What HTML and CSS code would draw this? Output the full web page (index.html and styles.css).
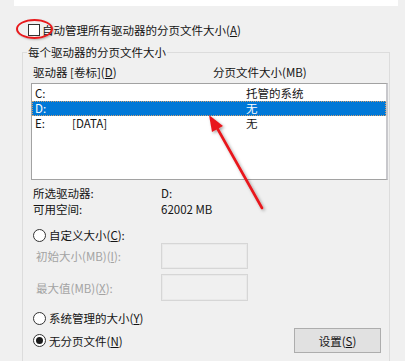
FILE: index.html
```html
<!DOCTYPE html>
<html lang="zh-CN">
<head>
<meta charset="utf-8">
<title>虚拟内存</title>
<link rel="stylesheet" href="styles.css">
</head>
<body>
<div class="page">
  <div class="topband"></div>
  <div class="auto-row">
    <span class="checkbox"></span>
    <span class="auto-label">自动管理所有驱动器的分页文件大小(<u>A</u>)</span>
  </div>
  <fieldset class="group">
    <legend class="legend">每个驱动器的分页文件大小</legend>
    <div class="headers">
      <span class="h-drive">驱动器 [卷标](<u>D</u>)</span>
      <span class="h-size">分页文件大小(MB)</span>
    </div>
    <div class="listbox">
      <div class="row"><span>C:</span><span></span><span>托管的系统</span></div>
      <div class="row selected"><span>D:</span><span></span><span>无</span></div>
      <div class="row"><span>E:</span><span>[DATA]</span><span>无</span></div>
    </div>
    <div class="info">
      <div class="info-row"><span class="info-label">所选驱动器:</span><span>D:</span></div>
      <div class="info-row"><span class="info-label">可用空间:</span><span>62002 MB</span></div>
    </div>
    <div class="radio-row custom">
      <span class="radio"></span><span>自定义大小(<u>C</u>):</span>
    </div>
    <div class="field-row first">
      <span class="field-label">初始大小(MB)(<u>I</u>):</span>
      <span class="field-input"></span>
    </div>
    <div class="field-row second">
      <span class="field-label">最大值(MB)(<u>X</u>):</span>
      <span class="field-input"></span>
    </div>
    <div class="radio-row system">
      <span class="radio"></span><span>系统管理的大小(<u>Y</u>)</span>
    </div>
    <div class="last-row">
      <div class="radio-row">
        <span class="radio checked"></span><span>无分页文件(<u>N</u>)</span>
      </div>
      <button class="btn" type="button">设置(<u>S</u>)</button>
    </div>
  </fieldset>

  <span class="ellipse"></span>
  <svg class="arrow" width="405" height="361" viewBox="0 0 405 361" xmlns="http://www.w3.org/2000/svg">
    <defs>
      <filter id="sh" x="-50%" y="-50%" width="200%" height="200%">
        <feDropShadow dx="1.5" dy="1.5" stdDeviation="1.5" flood-color="#000" flood-opacity="0.35"/>
      </filter>
    </defs>
    <g filter="url(#sh)">
      <line x1="262" y1="208" x2="216" y2="126" stroke="#e8191c" stroke-width="2.6" stroke-linecap="round"/>
      <polygon points="209,115 223,126 212,132" fill="#e8191c"/>
    </g>
  </svg>
</div>
</body>
</html>
```

FILE: styles.css
```css
html, body {
  margin: 0;
  padding: 0;
}
body {
  background: #f0f0f0;
  font-family: "Noto Sans CJK SC", "Noto Sans", sans-serif;
  font-size: 11.5px;
  color: #141414;
  overflow: hidden;
  width: 405px;
  height: 361px;
}
.page {
  position: relative;
  width: 405px;
  height: 361px;
  overflow: hidden;
}
u {
  text-decoration: underline;
  text-underline-offset: 1px;
}
.topband {
  margin-left: 14px;
  width: 384px;
  height: 6px;
  background: #ffffff;
}
.auto-row {
  display: flex;
  align-items: center;
  margin-top: 18px;
  margin-left: 28px;
  height: 12px;
  gap: 2px;
}
.checkbox {
  box-sizing: border-box;
  width: 12px;
  height: 12px;
  border: 1px solid #333;
  background: #fff;
  flex: none;
}
.auto-label {
  line-height: 16px;
  white-space: nowrap;
}
.group {
  box-sizing: border-box;
  margin: 8px 0 0 22px;
  width: 368px;
  min-width: 0;
  border: 1px solid #dcdcdc;
  padding: 0 1px 24px 8px;
}
.legend {
  padding: 0 1px;
  margin-left: -4px;
  line-height: 16px;
  white-space: nowrap;
}
.headers {
  display: flex;
  margin-top: 4px;
  height: 16px;
  line-height: 16px;
  padding-left: 2px;
  white-space: nowrap;
}
.h-drive {
  width: 180px;
}
.listbox {
  box-sizing: border-box;
  margin-top: 3px;
  height: 97px;
  background: #fff;
  border: 1px solid #a2a2a2;
  border-right: 2px solid #c8c8cc;
  padding-top: 2px;
}
.row {
  display: grid;
  grid-template-columns: 37px 174px 1fr;
  height: 15px;
  line-height: 15px;
  padding-left: 3px;
  white-space: nowrap;
}
.row.selected {
  background: #0078d7;
  color: #fff;
  outline: 1px dotted #d0a070;
  outline-offset: -1px;
}
.info {
  margin-top: 5px;
}
.info-row {
  display: flex;
  height: 16px;
  line-height: 16px;
  padding-left: 2px;
}
.info-label {
  width: 128px;
}
.radio-row {
  display: flex;
  align-items: center;
  height: 16px;
  line-height: 16px;
  padding-left: 2px;
  gap: 3px;
  white-space: nowrap;
}
.radio-row.custom {
  margin-top: 10px;
}
.radio-row.system {
  margin-top: 9px;
}
.radio {
  box-sizing: border-box;
  width: 13px;
  height: 13px;
  border: 1px solid #333;
  border-radius: 50%;
  background: #fff;
  flex: none;
  display: flex;
  align-items: center;
  justify-content: center;
}
.radio.checked::after {
  content: "";
  width: 7px;
  height: 7px;
  border-radius: 50%;
  background: #1a1a1a;
}
.field-row {
  display: flex;
  align-items: center;
  color: #a3a3a3;
  white-space: nowrap;
}
.field-row.second {
  margin-top: 5px;
}
.field-label {
  width: 125px;
  padding-left: 5px;
  line-height: 16px;
}
.field-input {
  box-sizing: border-box;
  width: 87px;
  height: 26px;
  border: 1px solid #d6d6d6;
  box-shadow: inset 0 0 0 1px #e9e9e9;
  background: #f0f0f0;
}
.field-row.second .field-input {
  height: 27px;
}
.last-row {
  display: flex;
  align-items: center;
  justify-content: space-between;
  margin-top: 2px;
  height: 25px;
}
.btn {
  box-sizing: border-box;
  width: 87px;
  height: 25px;
  margin-right: 7px;
  border: 1px solid #adadad;
  background: #e1e1e1;
  font-family: "Noto Sans CJK SC", "Noto Sans", sans-serif;
  font-size: 11.5px;
  color: #141414;
  padding: 0;
}
.ellipse {
  position: absolute;
  left: 16px;
  top: 19px;
  width: 37px;
  height: 20px;
  box-sizing: border-box;
  border: 2.5px solid #e8191c;
  border-radius: 50%;
  box-shadow: 1px 1px 2px rgba(0,0,0,0.25);
}
.arrow {
  position: absolute;
  left: 0;
  top: 0;
  pointer-events: none;
}
```
